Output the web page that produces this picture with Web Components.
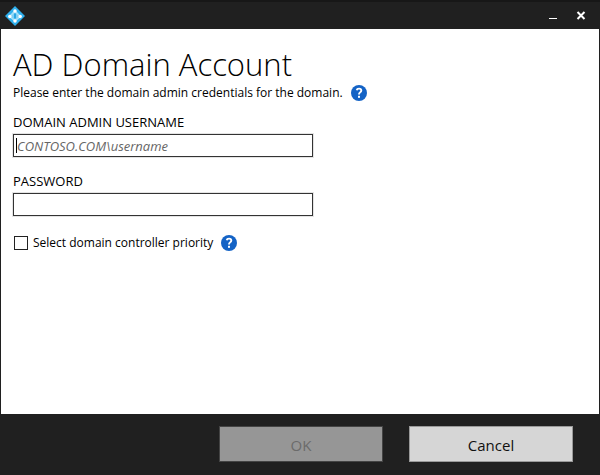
<!DOCTYPE html>
<html lang="en">
<head>
<meta charset="utf-8">
<title>AD Domain Account</title>
<style>
html, body { margin: 0; min-height: 100%; }
body { display: flex; min-height: 100vh; font: 12px/16px "Open Sans", "Noto Sans", sans-serif; color: #000; background: #202020; }
</style>
</head>
<body>
<account-dialog></account-dialog>
<script>
function define(name, html, setup) {
  const template = document.createElement('template');
  template.innerHTML = '<style>*{box-sizing:border-box}</style>' + html;
  customElements.define(name, class extends HTMLElement {
    constructor() {
      super();
      this.attachShadow({ mode: 'open' }).append(template.content.cloneNode(true));
    }
    connectedCallback() { if (setup) setup(this, this.shadowRoot); }
  });
}

define('app-logo', `
<style>:host{display:block;width:20px;height:20px} svg{display:block}</style>
<svg width="20" height="20" viewBox="0 0 20 20" aria-hidden="true">
  <path d="M10 0 20 10 10 20 0 10Z" fill="#2fb0ee"/>
  <path d="M10 5 15.2 10.5 10 15 4.8 10.5Z" fill="#7fd0f3" stroke="#a5dff7" stroke-width="1.6"/>
  <path d="M10 7.5v5" stroke="#2aa5e4" stroke-width="2"/>
  <g fill="#fff"><circle cx="10" cy="5" r="1.7"/><circle cx="10" cy="15" r="1.7"/><circle cx="4.8" cy="10.5" r="1.7"/><circle cx="15.2" cy="10.5" r="1.7"/></g>
</svg>`);

define('title-bar', `
<style>
:host{display:flex;align-items:center;justify-content:space-between;height:29px;padding:1px 5px 0;border-top:2px solid #171717}
div{display:flex}
button{width:28px;height:24px;padding:0;border:0;background:none;color:#fff}
svg{display:block;margin:auto}
</style>
<app-logo></app-logo>
<div>
  <button aria-label="Minimize"><svg width="10" height="10" viewBox="0 0 10 10"><path d="M1 7.5h8" stroke="#fff"/></svg></button>
  <button aria-label="Close"><svg width="10" height="10" viewBox="0 0 10 10"><path d="M1.5 1l7 7M8.5 1l-7 7" stroke="#fff" stroke-width="2"/></svg></button>
</div>`);

define('help-button', `
<style>
:host{display:block;width:16px;height:16px}
button{display:block;width:16px;height:16px;padding:0;border:0;background:none}
svg{display:block}
</style>
<button aria-label="Help"><svg width="16" height="16" viewBox="0 0 16 16">
  <circle cx="8" cy="8" r="8" fill="#1463c6"/>
  <path d="M5.7 5.2Q6 3.6 8 3.6 10.3 3.6 10.3 5.6 10.3 6.8 9 7.5 8 8.1 8 9.5" fill="none" stroke="#fff" stroke-width="1.9"/>
  <rect x="7" y="10.8" width="2" height="2" fill="#fff"/>
</svg></button>`);

define('text-field', `
<style>
:host{display:flex;flex-direction:column;gap:4px;max-width:300px;font-size:13px}
input{width:100%;height:23px;margin:0;padding:0 3px;border:1px solid #333;border-radius:0;outline:0;background:#fff;font:inherit;box-shadow:0 0 0 1px #e4e4e4}
input::placeholder{color:#666;font-style:italic;opacity:1}
:host([active]) input{background:linear-gradient(#000,#000) 2px 3px/1px 15px no-repeat #fff}
</style>
<label for="field"><slot></slot></label>
<input id="field">`, (host, root) => {
  const input = root.querySelector('input');
  input.type = host.getAttribute('type') || 'text';
  input.placeholder = host.getAttribute('placeholder') || '';
});

define('check-option', `
<style>
:host{display:flex;align-items:center;gap:5px}
input{appearance:none;width:14px;height:14px;margin:0 0 0 1px;border:1px solid #222;background:#fff}
input:checked{background:#1463c6}
</style>
<input type="checkbox" id="option"><label for="option"><slot></slot></label>`);

define('dialog-button', `
<style>
:host{display:block;flex:0 1 164px}
button{display:block;width:100%;height:36px;padding:2px 0 0;border:1px solid #999;border-radius:0;background:#d6d6d6;color:#111;font:inherit;font-size:15px}
button:disabled{border-color:#444;background:#969696;color:#6b6b6b}
</style>
<button><slot></slot></button>`, (host, root) => {
  root.querySelector('button').disabled = host.hasAttribute('disabled');
});

define('account-dialog', `
<style>
:host{display:flex;flex-direction:column;flex:1;min-width:0;background:#202020}
main{flex:1;margin:0 1px;padding:14px 12px;background:#fff}
h1{margin:0;font-size:31px;line-height:42px;font-weight:300}
.row{display:flex;align-items:center;gap:8px}
text-field{margin-top:13px}
text-field + text-field{margin-top:16px}
.option{margin-top:19px}
footer{display:flex;justify-content:flex-end;gap:26px;padding:12px 27px 13px}
</style>
<title-bar></title-bar>
<main>
  <h1>AD Domain Account</h1>
  <div class="row"><span>Please enter the domain admin credentials for the domain.</span><help-button></help-button></div>
  <text-field active placeholder="CONTOSO.COM\\username">DOMAIN ADMIN USERNAME</text-field>
  <text-field type="password">PASSWORD</text-field>
  <div class="row option"><check-option>Select domain controller priority</check-option><help-button></help-button></div>
</main>
<footer><dialog-button disabled>OK</dialog-button><dialog-button>Cancel</dialog-button></footer>`);
</script>
</body>
</html>
